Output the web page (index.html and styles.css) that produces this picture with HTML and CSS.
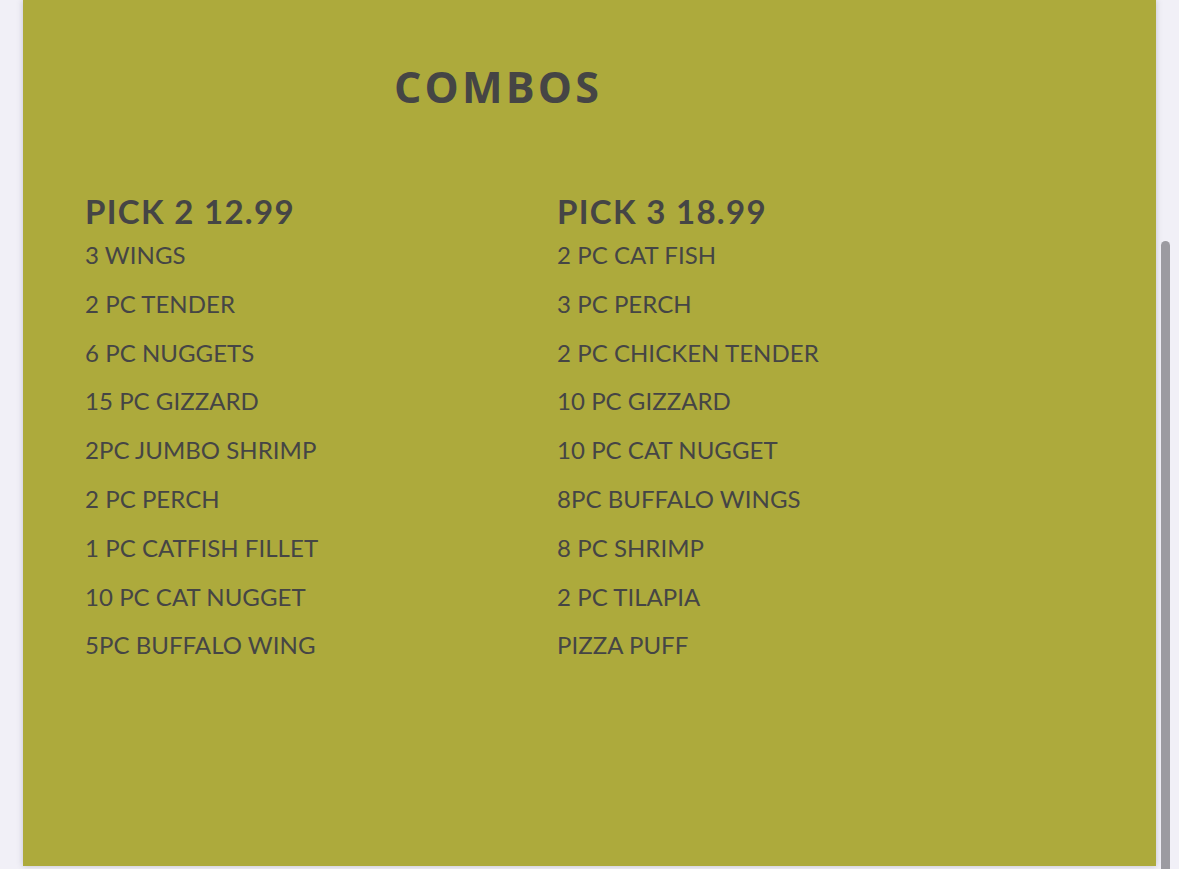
FILE: index.html
```html
<!DOCTYPE html>
<html>
<head>
<meta charset="utf-8">
<link rel="stylesheet" href="styles.css">
</head>
<body>
<div class="panel">
  <h1 class="title">COMBOS</h1>
  <div class="cols">
    <div class="col">
      <h2 class="head">PICK 2 12.99</h2>
      <ul class="items">
        <li>3 WINGS</li>
        <li>2 PC TENDER</li>
        <li>6 PC NUGGETS</li>
        <li>15 PC GIZZARD</li>
        <li>2PC JUMBO SHRIMP</li>
        <li>2 PC PERCH</li>
        <li>1 PC CATFISH FILLET</li>
        <li>10 PC CAT NUGGET</li>
        <li>5PC BUFFALO WING</li>
      </ul>
    </div>
    <div class="col">
      <h2 class="head">PICK 3 18.99</h2>
      <ul class="items">
        <li>2 PC CAT FISH</li>
        <li>3 PC PERCH</li>
        <li>2 PC CHICKEN TENDER</li>
        <li>10 PC GIZZARD</li>
        <li>10 PC CAT NUGGET</li>
        <li>8PC BUFFALO WINGS</li>
        <li>8 PC SHRIMP</li>
        <li>2 PC TILAPIA</li>
        <li>PIZZA PUFF</li>
      </ul>
    </div>
  </div>
</div>
<div class="scrollthumb"></div>
</body>
</html>
```
FILE: styles.css
```css
html, body {
  margin: 0;
  padding: 0;
  height: 869px;
  overflow: hidden;
  background: #f1f0f7;
}
body {
  font-family: "Lato", "Open Sans", sans-serif;
  color: #454545;
}
.panel {
  margin-left: 23px;
  width: 1133px;
  height: 866px;
  background: #adaa3c;
  box-shadow: 0 0 6px rgba(60, 60, 90, 0.25);
  box-sizing: border-box;
  padding: 0 0 0 62px;
}
.title {
  margin: 0;
  width: 826px;
  text-align: center;
  font-family: "Open Sans", sans-serif;
  font-weight: 700;
  font-size: 43px;
  line-height: 50px;
  padding-top: 62px;
  letter-spacing: 3.2px;
}
.cols {
  display: flex;
  margin-top: 79px;
}
.col {
  width: 472px;
}
.head {
  margin: 1px 0 0;
  font-weight: 700;
  font-size: 33px;
  line-height: 39px;
  letter-spacing: 1.3px;
}
.items {
  list-style: none;
  margin: 0;
  padding: 0;
}
.items li {
  font-size: 24px;
  line-height: 48.8px;
  letter-spacing: 0.05px;
}
.scrollthumb {
  position: absolute;
  left: 1161px;
  top: 241px;
  width: 9px;
  height: 640px;
  border-radius: 5px 5px 0 0;
  background: #9c9ba1;
}
```
